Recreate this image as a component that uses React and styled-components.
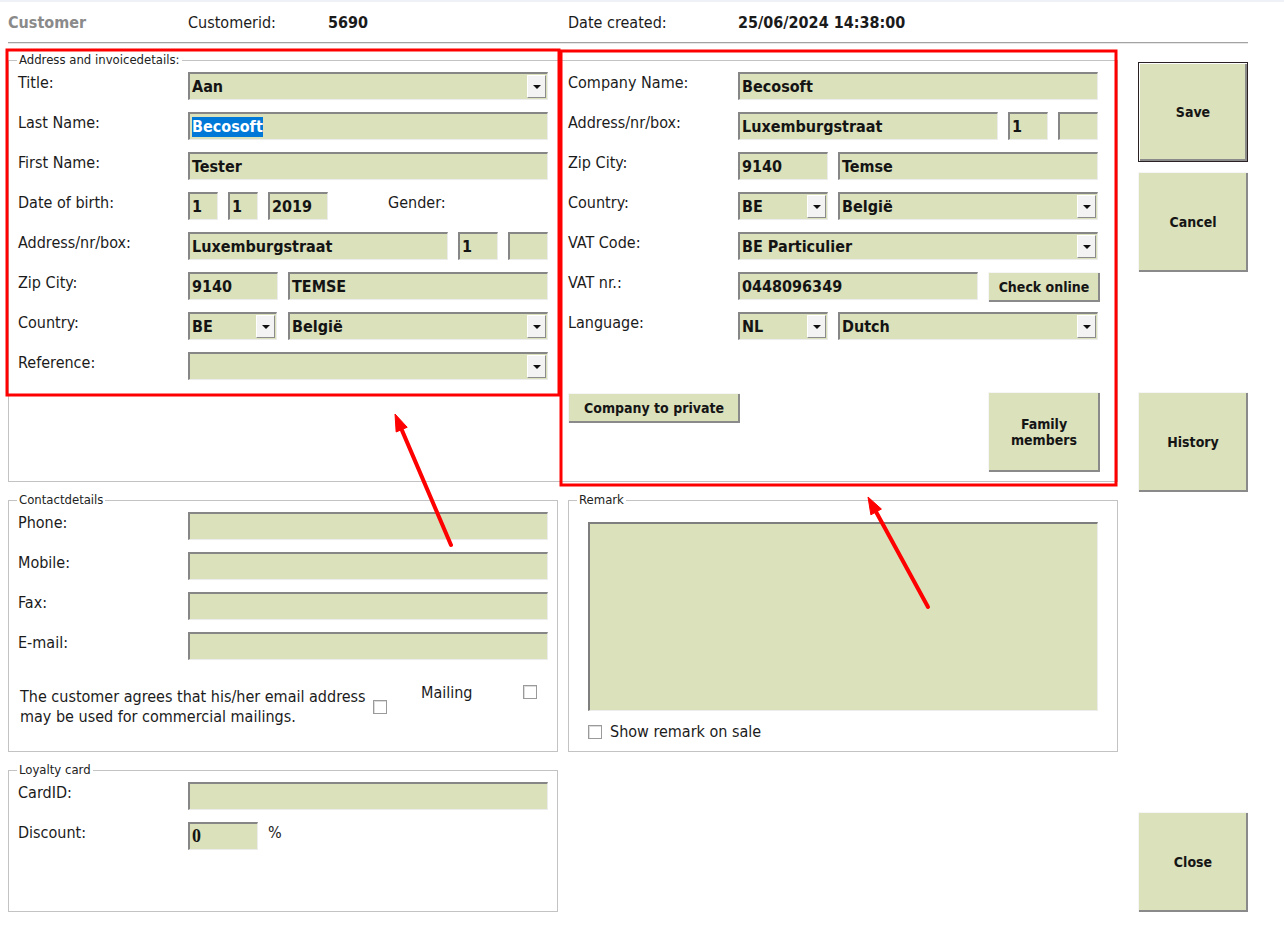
import React from "react"
import styled, { createGlobalStyle, css } from "styled-components"

const FONT = `"DejaVu Sans Condensed", "DejaVu Sans", sans-serif`

const GlobalStyle = createGlobalStyle`
  body {
    margin: 0;
    background: #fff;
    font-family: ${FONT};
    color: #1b1b1b;
  }
`

const Page = styled.div`
  position: relative;
  width: 1284px;
  height: 939px;
  overflow: hidden;
  font-size: 16px;
`

const TopBand = styled.div`
  height: 2px;
  background: #eef1f5;
`

const Header = styled.div`
  display: flex;
  align-items: center;
  height: 40px;
  padding-left: 8px;
`

const HeaderCell = styled.div`
  width: ${p => p.$w ? `${p.$w}px` : "auto"};
  font-weight: ${p => p.$bold ? 700 : 400};
  color: ${p => p.$muted ? "#8a8a8a" : "#1b1b1b"};
`

const Divider = styled.div`
  margin-left: 8px;
  width: 1240px;
  border-top: 1px solid #a3a3a3;
  border-bottom: 1px solid #e6e6e6;
`

const Body = styled.div`
  display: flex;
  gap: 20px;
  padding-left: 8px;
`

const Forms = styled.div`
  display: flex;
  flex-direction: column;
  gap: 18px;
  width: 1110px;
  padding-top: 16px;
`

const GroupRow = styled.div`
  display: flex;
  gap: 10px;
`

const Group = styled.div`
  position: relative;
  box-sizing: border-box;
  width: ${p => p.$w}px;
  height: ${p => p.$h}px;
  padding: ${p => p.$pad || "11px 9px 0 9px"};
  border: 1px solid #c3c3c3;
`

const Caption = styled.span`
  position: absolute;
  top: -8px;
  left: 8px;
  padding: 0 2px;
  background: #fff;
  font-size: 13px;
  line-height: 14px;
  color: #222;
`

const Columns = styled.div`
  display: flex;
  gap: 20px;
`

const Column = styled.div`
  display: flex;
  flex-direction: column;
  gap: 12px;
  width: 530px;
`

const Row = styled.div`
  display: flex;
  height: 28px;
`

const Label = styled.div`
  flex: none;
  width: ${p => p.$w || 170}px;
  margin-left: ${p => p.$ml || 0}px;
  padding-top: 1px;
  line-height: 20px;
`

const Fields = styled.div`
  display: flex;
  gap: ${p => p.$gap ?? 10}px;
`

const Field = styled.div`
  box-sizing: border-box;
  display: flex;
  align-items: center;
  flex: none;
  width: ${p => p.$w}px;
  height: ${p => p.$h || 28}px;
  padding-left: 2px;
  background: #dbe1bb;
  border-style: solid;
  border-width: 2px 1px 1px 2px;
  border-color: #868686 #ececec #ececec #868686;
  font-weight: 700;
  font-size: 16px;
  color: #141414;
  white-space: nowrap;
  overflow: hidden;
  ${p => p.$serif && css`
    font-family: "Liberation Serif", serif;
    font-size: 18px;
  `}
`

const Highlight = styled.span`
  display: inline-block;
  line-height: 20px;
  background: #0078d7;
  color: #fff;
`

const DropButton = styled.div`
  box-sizing: border-box;
  display: flex;
  align-items: center;
  justify-content: center;
  width: 19px;
  height: 23px;
  margin-left: auto;
  margin-right: 1px;
  background: #f3f3f3;
  border: 1px solid;
  border-color: #fff #8c8c8c #8c8c8c #fff;
`

const Caret = styled.span`
  width: 0;
  height: 0;
  border-left: 4px solid transparent;
  border-right: 4px solid transparent;
  border-top: 4px solid #111;
`

const Select = ({ w, children }) =>
  <Field $w={ w }>
    { children }
    <DropButton><Caret /></DropButton>
  </Field>

const Button = styled.button`
  box-sizing: border-box;
  flex: none;
  width: ${p => p.$w}px;
  height: ${p => p.$h}px;
  margin-top: ${p => p.$mt || 0}px;
  padding: 0;
  background: #dbe1bb;
  border: none;
  box-shadow: inset 1px 1px 0 #f6f6f6, inset -2px -2px 0 #8a8a8a;
  font-family: ${FONT};
  font-size: 14px;
  font-weight: 700;
  line-height: 16px;
  color: #151515;
  ${p => p.$focused && css`
    border: 1px solid #2a2222;
    box-shadow: inset 1px 1px 0 #fff, inset -2px -2px 0 #8a8a8a;
  `}
`

const ButtonColumn = styled.div`
  display: flex;
  flex-direction: column;
  padding-top: 18px;
`

const CompanyActions = styled.div`
  display: flex;
  justify-content: space-between;
  align-items: flex-start;
  width: 532px;
  margin-top: 40px;
`

const Checkbox = styled.span`
  box-sizing: border-box;
  flex: none;
  display: block;
  width: 14px;
  height: 14px;
  margin-top: ${p => p.$mt || 0}px;
  margin-left: ${p => p.$ml || 0}px;
  background: #fff;
  border: 1px solid #9a9a9a;
  box-shadow: inset 1px 1px 0 #dcdcdc;
`

const Consent = styled.div`
  display: flex;
  align-items: flex-start;
  margin-top: 22px;
`

const ConsentText = styled.div`
  flex: none;
  box-sizing: border-box;
  width: 355px;
  margin-top: 5px;
  padding-left: 2px;
  line-height: 20px;
  white-space: nowrap;
`

const Memo = styled.div`
  box-sizing: border-box;
  width: 510px;
  height: 189px;
  background: #dbe1bb;
  border-style: solid;
  border-width: 2px 1px 1px 2px;
  border-color: #7e7e7e #ececec #ececec #7e7e7e;
`

const CheckRow = styled.div`
  display: flex;
  align-items: center;
  gap: 8px;
  margin-top: 14px;
  line-height: 14px;
`

const Annotations = styled.svg`
  position: absolute;
  left: 0;
  top: 0;
  pointer-events: none;
`

// red call-out arrow, head computed from the shaft direction
const Arrow = ({ from, to }) => {
  const dx = to[0] - from[0]
  const dy = to[1] - from[1]
  const len = Math.hypot(dx, dy)
  const ux = dx / len
  const uy = dy / len
  const bx = to[0] - ux * 17
  const by = to[1] - uy * 17
  const head = [
    to,
    [bx - uy * 6, by + ux * 6],
    [bx + uy * 6, by - ux * 6]
  ].map(p => p.join(",")).join(" ")
  return (
    <g fill="#f00" stroke="#f00">
      <line x1={ from[0] } y1={ from[1] } x2={ bx } y2={ by } strokeWidth="4" strokeLinecap="round" />
      <polygon points={ head } strokeWidth="1" />
    </g>
  )
}

export default function App() {
  return (
    <Page>
      <GlobalStyle />
      <TopBand />
      <Header>
        <HeaderCell $w={ 180 } $bold $muted>Customer</HeaderCell>
        <HeaderCell $w={ 140 }>Customerid:</HeaderCell>
        <HeaderCell $w={ 240 } $bold>5690</HeaderCell>
        <HeaderCell $w={ 170 }>Date created:</HeaderCell>
        <HeaderCell $bold>25/06/2024 14:38:00</HeaderCell>
      </Header>
      <Divider />

      <Body>
        <Forms>
          <Group $w={ 1110 } $h={ 422 }>
            <Caption>Address and invoicedetails:</Caption>
            <Columns>
              <Column>
                <Row>
                  <Label>Title:</Label>
                  <Select w={ 360 }>Aan</Select>
                </Row>
                <Row>
                  <Label>Last Name:</Label>
                  <Field $w={ 360 }><Highlight>Becosoft</Highlight></Field>
                </Row>
                <Row>
                  <Label>First Name:</Label>
                  <Field $w={ 360 }>Tester</Field>
                </Row>
                <Row>
                  <Label>Date of birth:</Label>
                  <Fields>
                    <Field $w={ 30 }>1</Field>
                    <Field $w={ 30 }>1</Field>
                    <Field $w={ 60 }>2019</Field>
                  </Fields>
                  <Label $ml={ 60 } $w={ 100 }>Gender:</Label>
                </Row>
                <Row>
                  <Label>Address/nr/box:</Label>
                  <Fields>
                    <Field $w={ 260 }>Luxemburgstraat</Field>
                    <Field $w={ 40 }>1</Field>
                    <Field $w={ 40 } />
                  </Fields>
                </Row>
                <Row>
                  <Label>Zip City:</Label>
                  <Fields>
                    <Field $w={ 90 }>9140</Field>
                    <Field $w={ 260 }>TEMSE</Field>
                  </Fields>
                </Row>
                <Row>
                  <Label>Country:</Label>
                  <Fields $gap={ 11 }>
                    <Select w={ 89 }>BE</Select>
                    <Select w={ 260 }>België</Select>
                  </Fields>
                </Row>
                <Row>
                  <Label>Reference:</Label>
                  <Select w={ 360 } />
                </Row>
              </Column>

              <Column>
                <Row>
                  <Label>Company Name:</Label>
                  <Field $w={ 360 }>Becosoft</Field>
                </Row>
                <Row>
                  <Label>Address/nr/box:</Label>
                  <Fields>
                    <Field $w={ 260 }>Luxemburgstraat</Field>
                    <Field $w={ 40 }>1</Field>
                    <Field $w={ 40 } />
                  </Fields>
                </Row>
                <Row>
                  <Label>Zip City:</Label>
                  <Fields>
                    <Field $w={ 90 }>9140</Field>
                    <Field $w={ 260 }>Temse</Field>
                  </Fields>
                </Row>
                <Row>
                  <Label>Country:</Label>
                  <Fields>
                    <Select w={ 90 }>BE</Select>
                    <Select w={ 260 }>België</Select>
                  </Fields>
                </Row>
                <Row>
                  <Label>VAT Code:</Label>
                  <Select w={ 360 }>BE Particulier</Select>
                </Row>
                <Row>
                  <Label>VAT nr.:</Label>
                  <Fields>
                    <Field $w={ 240 }>0448096349</Field>
                    <Button $w={ 112 } $h={ 30 }>Check online</Button>
                  </Fields>
                </Row>
                <Row>
                  <Label>Language:</Label>
                  <Fields>
                    <Select w={ 90 }>NL</Select>
                    <Select w={ 260 }>Dutch</Select>
                  </Fields>
                </Row>
                <CompanyActions>
                  <Button $w={ 172 } $h={ 30 } $mt={ 1 }>Company to private</Button>
                  <Button $w={ 112 } $h={ 80 }>Family<br />members</Button>
                </CompanyActions>
              </Column>
            </Columns>
          </Group>

          <GroupRow>
            <Group $w={ 550 } $h={ 252 }>
              <Caption>Contactdetails</Caption>
              <Column>
                <Row>
                  <Label>Phone:</Label>
                  <Field $w={ 360 } />
                </Row>
                <Row>
                  <Label>Mobile:</Label>
                  <Field $w={ 360 } />
                </Row>
                <Row>
                  <Label>Fax:</Label>
                  <Field $w={ 360 } />
                </Row>
                <Row>
                  <Label>E-mail:</Label>
                  <Field $w={ 360 } />
                </Row>
              </Column>
              <Consent>
                <ConsentText>
                  The customer agrees that his/her email address<br />
                  may be used for commercial mailings.
                </ConsentText>
                <Checkbox $mt={ 18 } />
                <Label $ml={ 34 } $w={ 102 }>Mailing</Label>
                <Checkbox $mt={ 3 } />
              </Consent>
            </Group>

            <Group $w={ 550 } $h={ 252 } $pad="21px 19px 0 19px">
              <Caption>Remark</Caption>
              <Memo />
              <CheckRow>
                <Checkbox />
                <span>Show remark on sale</span>
              </CheckRow>
            </Group>
          </GroupRow>

          <Group $w={ 550 } $h={ 142 }>
            <Caption>Loyalty card</Caption>
            <Column>
              <Row>
                <Label>CardID:</Label>
                <Field $w={ 360 } />
              </Row>
              <Row>
                <Label>Discount:</Label>
                <Field $w={ 70 } $serif>0</Field>
                <Label $ml={ 10 } $w={ 30 }>%</Label>
              </Row>
            </Column>
          </Group>
        </Forms>

        <ButtonColumn>
          <Button $w={ 110 } $h={ 100 } $focused>Save</Button>
          <Button $w={ 110 } $h={ 100 } $mt={ 10 }>Cancel</Button>
          <Button $w={ 110 } $h={ 100 } $mt={ 120 }>History</Button>
          <Button $w={ 110 } $h={ 100 } $mt={ 320 }>Close</Button>
        </ButtonColumn>
      </Body>

      <Annotations width="1284" height="939">
        <rect x="7" y="50" width="552" height="345" fill="none" stroke="#f00" strokeWidth="3" />
        <rect x="561" y="51" width="555" height="434" fill="none" stroke="#f00" strokeWidth="3" />
        <Arrow from={ [451, 545] } to={ [395, 414] } />
        <Arrow from={ [928, 607] } to={ [868, 497] } />
      </Annotations>
    </Page>
  )
}
